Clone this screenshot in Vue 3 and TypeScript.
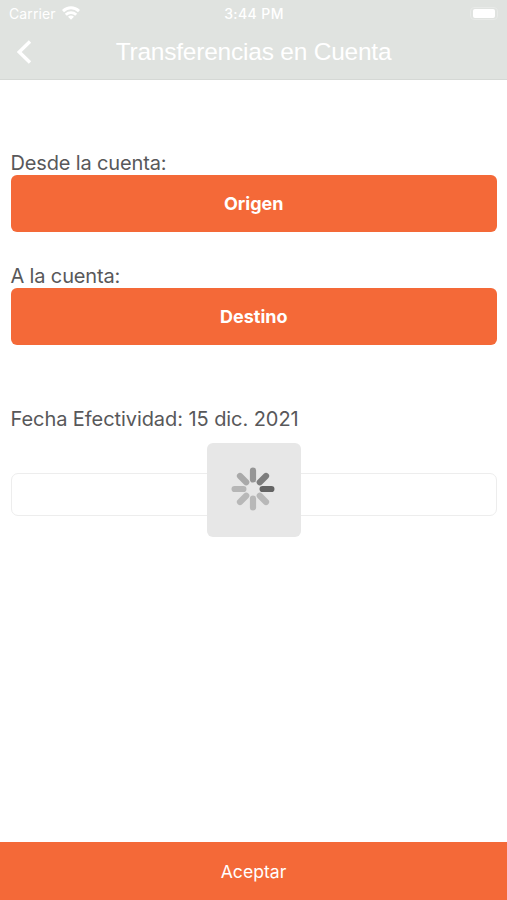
<script setup lang="ts">
interface Account {
  id: string
  label: string
  action: string
}

const accounts: Account[] = [
  { id: 'from', label: 'Desde la cuenta:', action: 'Origen' },
  { id: 'to', label: 'A la cuenta:', action: 'Destino' },
]

// Spinner blades, clockwise from the top
const blades: string[] = ['#959595', '#7d7d7d', '#646464', '#b8b8b8', '#b8b8b8', '#b8b8b8', '#b6b6b6', '#a9a9a9']
</script>

<template>
  <div class="screen">
    <header class="header">
      <div class="status">
        <div class="carrier">
          <span>Carrier</span>
          <svg class="wifi" width="18" height="14" viewBox="0 0 18 14" fill="none" stroke="#fff" stroke-width="2.9">
            <path d="M1 5.1C5.7.7 12.3.7 17 5.1" />
            <path d="M3.8 8.7C6.8 5.9 11.2 5.9 14.2 8.7" />
            <path d="M6 10.7C7.7 9.2 10.3 9.2 12 10.7L9 13.8Z" fill="#fff" stroke="none" />
          </svg>
        </div>
        <span class="time">3:44 PM</span>
        <div class="battery"><i></i></div>
      </div>
      <div class="nav">
        <button class="back" aria-label="Atrás">
          <svg width="16" height="24" viewBox="0 0 16 24" fill="none" stroke="#fff" stroke-width="3.4">
            <path d="M14 1.5 3.2 12 14 22.5" />
          </svg>
        </button>
        <h1 class="title">Transferencias en Cuenta</h1>
      </div>
    </header>

    <main class="content">
      <section v-for="account in accounts" :key="account.id" class="account">
        <p class="label">{{ account.label }}</p>
        <button class="select" :class="account.id">{{ account.action }}</button>
      </section>
      <p class="date">Fecha Efectividad: 15 dic. 2021</p>
      <div class="field">
        <div class="loader">
          <svg width="44" height="44" viewBox="-22 -22 44 44">
            <rect
              v-for="(color, i) in blades"
              :key="i"
              x="-3.1"
              y="-21.5"
              width="6.2"
              height="15"
              rx="3.1"
              :fill="color"
              :transform="`rotate(${i * 45})`"
            />
          </svg>
        </div>
      </div>
    </main>

    <button class="accept"><span>Aceptar</span></button>
  </div>
</template>

<style>
body {
  margin: 0;
  background: #fff;
}
</style>

<style scoped>
.screen {
  display: flex;
  flex-direction: column;
  height: 900px;
  font-family: Inter, "Liberation Sans", sans-serif;
  color: #58585a;
}
button {
  border: 0;
  padding: 0;
  font-family: inherit;
  color: #fff;
}
p,
h1 {
  margin: 0;
  white-space: nowrap;
}
.header {
  box-sizing: border-box;
  height: 80px;
  background: #e0e3e0;
  border-bottom: 1px solid #d5d8d5;
  color: #fff;
}
.status {
  display: grid;
  grid-template-columns: 1fr auto 1fr;
  align-items: center;
  height: 27px;
  padding: 0 8px 0 9px;
  font-size: 14px;
}
.carrier {
  display: flex;
  align-items: center;
  gap: 6px;
  letter-spacing: 0.1px;
}
.wifi {
  margin-top: -1px;
}
.time {
  font-weight: 500;
  letter-spacing: 0.4px;
}
.battery {
  justify-self: end;
  box-sizing: border-box;
  width: 28px;
  height: 13px;
  padding: 1px 2px;
  border: 1px solid #e8eae8;
  border-radius: 4px;
  margin-right: 1px;
}
.battery i {
  display: block;
  width: 22px;
  height: 9px;
  border-radius: 2px;
  background: #fff;
}
.nav {
  display: grid;
  grid-template-columns: 40px 1fr 40px;
  align-items: center;
  height: 50px;
}
.back {
  width: 16px;
  height: 24px;
  margin-left: 16px;
  background: none;
}
.title {
  font: 400 24.5px/30px "Liberation Sans", sans-serif;
  letter-spacing: -0.22px;
  text-align: center;
}
.content {
  flex: 1;
  padding: 70px 10px 0 10.5px;
}
.account {
  height: 113px;
}
.label,
.date {
  height: 25px;
  font-size: 20px;
  line-height: 26px;
  letter-spacing: -0.15px;
}
.select {
  display: block;
  width: 100%;
  height: 57px;
  border-radius: 6px;
  background: #f46938;
  font-size: 18px;
  font-weight: 700;
}
.date {
  margin-top: 30px;
  letter-spacing: -0.07px;
}
.field {
  box-sizing: border-box;
  display: flex;
  align-items: flex-start;
  justify-content: center;
  height: 43px;
  margin-top: 42px;
  border: 1px solid #ededed;
  border-radius: 7px;
}
.loader {
  box-sizing: border-box;
  display: flex;
  justify-content: center;
  flex: none;
  width: 94px;
  height: 94px;
  padding: 24px 2px 0 0;
  margin-top: -31px;
  border-radius: 6px;
  background: #e7e7e7;
}
.accept {
  height: 58px;
  background: #f46938;
  font-size: 17.6px;
}
</style>
